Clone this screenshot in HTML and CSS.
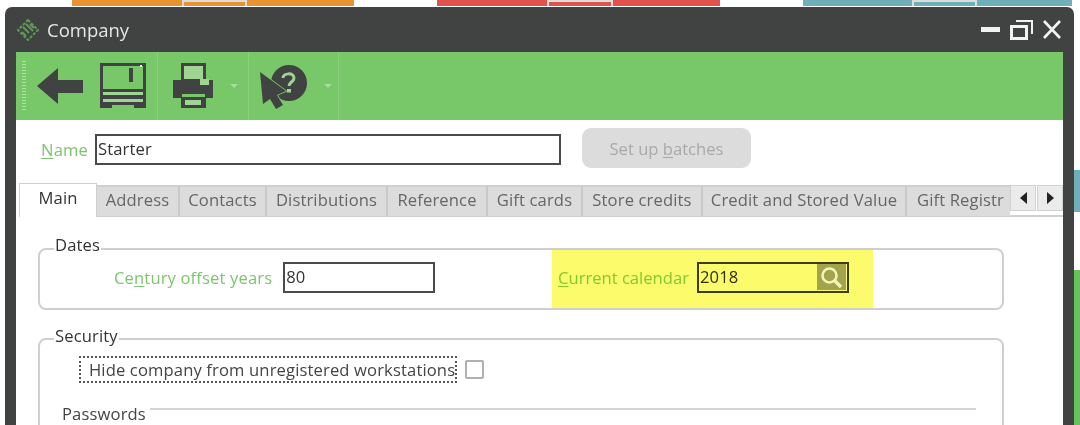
FILE: index.html
```html
<!DOCTYPE html>
<html lang="en">
<head>
<meta charset="utf-8">
<title>Company</title>
<link rel="stylesheet" href="styles.css">
</head>
<body>
<div class="strip">
  <span class="seg s-blank-a"></span><span class="seg s-orange-a"></span><span class="seg s-grey-a"></span><span class="seg s-orange-b"></span>
  <span class="seg s-blank-b"></span><span class="seg s-red-a"></span><span class="seg s-grey-b"></span><span class="seg s-red-b"></span>
  <span class="seg s-blank-c"></span><span class="seg s-teal-a"></span><span class="seg s-grey-c"></span><span class="seg s-teal-b"></span>
</div>
<div class="stage">
  <main class="window">
    <header class="titlebar">
      <svg class="logo" viewBox="0 0 22 22" aria-hidden="true">
        <g fill="none" stroke="#5f9c56" stroke-width="2">
          <path d="M11 1 21 11 11 21 1 11Z" stroke-dasharray="3 1.5"/>
          <path d="M6 8 12 14M9 5 16 12M5 13 9 17M13 5 17 9"/>
        </g>
      </svg>
      <span class="title">Company</span>
      <span class="winbtns">
        <svg class="w-min" viewBox="0 0 19 5" aria-hidden="true"><rect width="19" height="5" fill="#f2f2f2"/></svg>
        <svg class="w-restore" viewBox="0 0 23 21" aria-hidden="true">
          <g fill="none" stroke="#f2f2f2">
            <rect x="1.5" y="7.5" width="15" height="12" stroke-width="3"/>
            <path d="M6 2H22V15" stroke-width="2"/>
          </g>
        </svg>
        <svg class="w-close" viewBox="0 0 18 19" aria-hidden="true"><path d="M1 1 17 18M17 1 1 18" stroke="#f2f2f2" stroke-width="2.6" fill="none"/></svg>
      </span>
    </header>

    <div class="toolbar">
      <div class="tb-group tb-first">
        <span class="grip"></span>
        <svg class="i-back" viewBox="0 0 46 36" aria-hidden="true"><path d="M0 18 21 0V12H46V25H21V36Z" fill="#404341"/></svg>
        <svg class="i-save" viewBox="0 0 46 45" aria-hidden="true">
          <path d="M0 0H46V45H34V42H12V45H0Z" fill="#404341"/>
          <rect x="3" y="3" width="40" height="23" fill="#78c769"/>
          <rect x="29" y="5" width="4" height="14" fill="#404341"/>
          <rect x="40" y="2" width="2" height="2" fill="#e8f3e4"/>
          <rect x="3" y="29" width="40" height="3" fill="#9fd493"/>
          <rect x="3" y="36" width="40" height="3" fill="#9fd493"/>
        </svg>
      </div>
      <div class="tb-group tb-print">
        <svg class="i-print" viewBox="0 0 40 45" aria-hidden="true">
          <path d="M8 0H33V17H40V35H33V45H8V35H0V17H8Z" fill="#404341"/>
          <rect x="11" y="3" width="19" height="13" fill="#9fd493"/>
          <rect x="27" y="16" width="9" height="6" fill="#9fd493"/>
          <rect x="9" y="31" width="23" height="3" fill="#78c769"/>
          <rect x="12" y="37" width="16" height="5" fill="#9fd493"/>
        </svg>
        <span class="caret"></span>
      </div>
      <div class="tb-group tb-help">
        <svg class="i-help" viewBox="0 0 47 44" aria-hidden="true">
          <circle cx="29" cy="18" r="18" fill="#404341"/>
          <path d="M0 7 26 26 17 30 23 40 16 44 10 34 3 39Z" fill="#404341" stroke="#78c769" stroke-width="1.6" paint-order="stroke"/>
          <path d="M23 13C23 8 34 7 34 13 34 17 29 17 29 21" fill="none" stroke="#9fd493" stroke-width="3"/>
          <rect x="27" y="24" width="4" height="3.5" fill="#9fd493"/>
        </svg>
        <span class="caret"></span>
      </div>
    </div>

    <div class="content">
      <div class="name-row">
        <label class="lbl lbl-name"><u>N</u>ame</label>
        <div class="input input-name">Starter</div>
        <button class="btn-batches" type="button">Set up <u>b</u>atches</button>
      </div>

      <nav class="tabs">
        <span class="tab tab-active t-main">Main</span>
        <span class="tab t-address">Address</span>
        <span class="tab t-contacts">Contacts</span>
        <span class="tab t-dist">Distributions</span>
        <span class="tab t-ref">Reference</span>
        <span class="tab t-gift">Gift cards</span>
        <span class="tab t-store">Store credits</span>
        <span class="tab t-credit">Credit and Stored Value</span>
        <span class="tab t-registry">Gift Registr</span>
        <span class="tab-scroll">
          <span class="scroll-btn"><svg viewBox="0 0 7 12" aria-hidden="true"><path d="M7 0V12L0 6Z" fill="#222"/></svg></span>
          <span class="scroll-btn"><svg viewBox="0 0 7 12" aria-hidden="true"><path d="M0 0V12L7 6Z" fill="#222"/></svg></span>
        </span>
      </nav>

      <section class="group group-dates">
        <span class="legend">Dates</span>
        <div class="field-century">
          <label class="lbl">Ce<u>n</u>tury offset years</label>
          <div class="input input-short">80</div>
        </div>
        <div class="highlight">
          <label class="lbl lbl-cal"><u>C</u>urrent calendar</label>
          <div class="input input-cal">
            <span>2018</span>
            <span class="search">
              <svg viewBox="0 0 24 22" aria-hidden="true"><g fill="none" stroke="#f4f4b8"><circle cx="10.500" cy="9.500" r="7" stroke-width="2.600"/><path d="M15.500 14.500 22 21" stroke-width="3.400"/></g></svg>
            </span>
          </div>
        </div>
      </section>

      <section class="group group-security">
        <span class="legend">Security</span>
        <div class="check-row">
          <span class="focus">Hide company from unre<u>g</u>istered workstations</span>
          <span class="checkbox"></span>
        </div>
        <div class="passwords">
          <span>Passwords</span>
          <span class="rule"></span>
        </div>
      </section>
    </div>
  </main>
  <aside class="side">
    <span class="side-teal"></span>
    <span class="side-green"></span>
  </aside>
</div>
</body>
</html>
```
FILE: styles.css
```css
* { box-sizing: border-box; }
html, body { margin: 0; padding: 0; }
body {
  width: 1080px;
  height: 425px;
  overflow: hidden;
  background: #fff;
  font-family: "Open Sans", "Liberation Sans", sans-serif;
  font-size: 16.6px;
  letter-spacing: 0.13px;
  color: #3a3a3a;
}
u { text-underline-offset: 2px; }

.strip { display: flex; height: 7px; align-items: flex-start; }
.seg { display: block; height: 6px; flex: none; }
.s-blank-a { width: 72px; }
.s-orange-a { width: 110px; background: #e8932f; }
.s-grey-a { width: 65px; background: #e8932f; border-top: 2px solid #ddd; border-left: 2px solid #ddd; border-right: 2px solid #ddd; }
.s-orange-b { width: 107px; background: #e8932f; }
.s-blank-b { width: 83px; }
.s-red-a { width: 110px; background: #e2524c; }
.s-grey-b { width: 66px; background: #e2524c; border-top: 2px solid #ddd; border-left: 2px solid #ddd; border-right: 2px solid #ddd; }
.s-red-b { width: 107px; background: #e2524c; }
.s-blank-c { width: 83px; }
.s-teal-a { width: 109px; background: #6fb0b8; }
.s-grey-c { width: 65px; background: #6fb0b8; border-top: 2px solid #ddd; border-left: 2px solid #ddd; border-right: 2px solid #ddd; }
.s-teal-b { width: 95px; background: #6fb0b8; }

.stage { display: flex; height: 418px; padding-left: 5px; }
.window {
  width: 1069px;
  height: 418px;
  flex: none;
  background: #404341;
  border-radius: 7px 7px 0 0;
  padding: 0 11px;
  overflow: hidden;
  filter: blur(0.7px);
}

.titlebar { height: 45px; display: flex; align-items: center; color: #eee; }
.logo { width: 22px; height: 22px; margin-left: 1px; }
.title { margin-left: 8px; font-size: 18.5px; letter-spacing: 0; color: #e6e6e6; }
.winbtns { margin-left: auto; display: flex; align-items: center; gap: 10px; margin-right: 2px; }
.w-min { width: 19px; height: 5px; }
.w-restore { width: 23px; height: 21px; }
.w-close { width: 18px; height: 19px; }

.toolbar { height: 68px; background: #78c769; display: flex; }
.tb-group { display: flex; align-items: center; height: 100%; border-right: 1px solid #8ad07c; flex: none; }
.tb-first { width: 142px; padding-left: 6px; }
.grip {
  width: 4px; height: 50px; flex: none;
  background: repeating-linear-gradient(to bottom, #b7e2ae 0 1px, #78c769 1px 3px);
}
.i-back { width: 46px; height: 36px; margin-left: 11px; }
.i-save { width: 46px; height: 45px; margin-left: 17px; margin-top: -1px; }
.tb-print { width: 91px; padding-left: 15px; }
.i-print { width: 40px; height: 45px; margin-top: -1px; }
.tb-help { width: 90px; padding-left: 11px; }
.i-help { width: 47px; height: 44px; margin-top: 2px; }
.caret {
  width: 0; height: 0; flex: none; margin-left: 17px;
  border-left: 4px solid transparent; border-right: 4px solid transparent; border-top: 4px solid #a9dc9e;
}

.content { background: #fff; height: 306px; }

.lbl { color: #7cc56e; white-space: nowrap; }
.lbl u { text-decoration-thickness: 1px; }
.input {
  background: #fff;
  border: 2px solid #4a4a4a;
  color: #333;
  line-height: 25px;
  padding-left: 1px;
}

.name-row { height: 63px; padding: 14px 0 0 25px; display: flex; align-items: flex-start; position: relative; }
.lbl-name { margin-top: 4px; width: 54px; flex: none; }
.input-name { width: 466px; height: 31px; flex: none; }
.btn-batches {
  width: 169px; height: 40px; margin: -6px 0 0 21px; flex: none;
  border: 0; border-radius: 9px; background: #dcdcdc; color: #a9a9a9;
  font: inherit; padding: 0; letter-spacing: 0;
}

.tabs { display: flex; align-items: flex-end; height: 34px; margin-left: 3px; border-bottom: 2px solid #d0d0d0; position: relative; overflow: visible; }
.tab {
  flex: none; height: 31px; background: #dcdcdc; color: #666;
  border-right: 2px solid #c8c8c8; border-top: 2px solid #cfcfcf;
  text-align: center; line-height: 25px; white-space: nowrap; overflow: hidden;
  margin-bottom: -1px;
}
.tab-active {
  height: 34px; background: #fff; color: #333;
  border: 1px solid #cfcfcf; border-bottom: 0; margin-bottom: -2px; line-height: 28px;
}
.t-main { width: 78px; }
.t-address { width: 83px; }
.t-contacts { width: 87px; }
.t-dist { width: 121px; }
.t-ref { width: 100px; }
.t-gift { width: 95px; }
.t-store { width: 120px; }
.t-credit { width: 204px; }
.t-registry { width: 103px; text-align: left; padding-left: 10px; border-right: 0; }
.tab-scroll { display: flex; gap: 1px; position: absolute; right: 0; top: 2px; }
.scroll-btn {
  width: 26px; height: 26px; background: #ebebeb; border: 1px solid #d2d2d2;
  display: flex; align-items: center; justify-content: center;
}
.scroll-btn svg { width: 7px; height: 12px; }

.group { border: 2px solid #cfcfcf; border-radius: 8px; margin-left: 22px; width: 966px; position: relative; }
.legend { position: absolute; left: 14px; top: -16px; background: #fff; padding: 0 1px; line-height: 22px; color: #333; }
.group-dates { margin-top: 31px; height: 62px; display: flex; }
.field-century { display: flex; align-items: center; padding: 0 0 3px 74px; width: 512px; flex: none; }
.field-century .input { width: 152px; height: 31px; margin-left: 11px; flex: none; }
.highlight { width: 321px; flex: none; background: #fbfb6c; display: flex; align-items: center; padding: 0 0 3px 6px; }
.lbl-cal { color: #83c92e; letter-spacing: 0; }
.input-cal { width: 152px; height: 31px; margin-left: 8px; flex: none; background: #fbfb6c; border-color: #3d3d17; display: flex; justify-content: space-between; color: #2f2f10; }
.search { width: 29px; height: 26px; margin-right: 1px; background: #a3a34c; display: flex; align-items: center; justify-content: center; }
.search svg { width: 24px; height: 22px; }

.group-security { margin-top: 28px; height: 120px; padding: 16px 0 0 39px; }
.group-security .legend { top: -15px; }
.check-row { display: flex; align-items: center; gap: 8px; }
.focus { width: 378px; height: 27px; flex: none; border: 2px dotted #555; padding-left: 8px; line-height: 23px; white-space: nowrap; color: #444; }
.checkbox { width: 19px; height: 19px; border: 2px solid #b0b0b0; border-radius: 2px; background: #fff; }
.passwords { display: flex; align-items: flex-start; margin: 20px 26px 0 -17px; height: 24px; line-height: 22px; color: #444; }
.rule { flex: 1; height: 2px; background: #d4d4d4; margin: 5px 0 0 4px; }

.side { width: 6px; height: 418px; flex: none; padding-top: 163px; }
.side-teal { display: block; height: 42px; background: #6fb0b8; }
.side-green { display: block; height: 155px; margin-top: 58px; background: #66c35c; }
```
